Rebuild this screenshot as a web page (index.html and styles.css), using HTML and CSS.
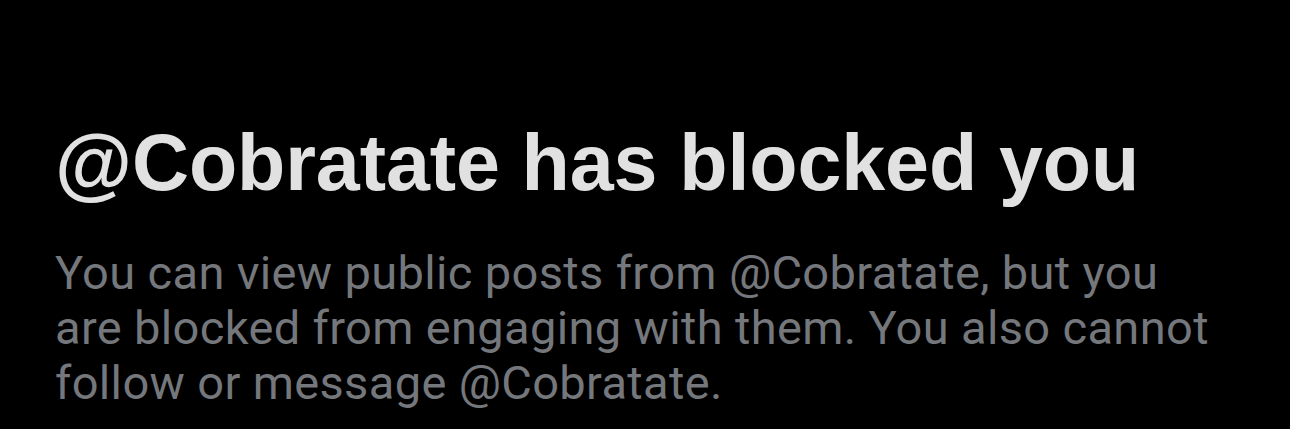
FILE: index.html
```html
<!DOCTYPE html>
<html>
<head>
<meta charset="utf-8">
<link rel="stylesheet" href="styles.css">
</head>
<body>
<main class="blocked">
  <h1 class="blocked-title">@Cobratate has blocked you</h1>
  <p class="blocked-text">You can view public posts from @Cobratate, but you are blocked from engaging with them. You also cannot follow or message @Cobratate.</p>
</main>
</body>
</html>
```

FILE: styles.css
```css
html, body {
  margin: 0;
  padding: 0;
  background: #000;
  height: 100%;
}
.blocked {
  padding: 115px 60px 0 55px;
  display: flex;
  flex-direction: column;
  gap: 34px;
}
.blocked-title {
  margin: 0;
  font-family: "Liberation Sans", Arial, sans-serif;
  font-weight: 700;
  font-size: 79px;
  line-height: 96px;
  color: #e1e1e1;
  letter-spacing: -0.1px;
}
.blocked-text {
  margin: 0;
  font-family: Roboto, "Liberation Sans", sans-serif;
  font-size: 47px;
  line-height: 55px;
  letter-spacing: 0.35px;
  color: #74777b;
  max-width: 1175px;
}
```
